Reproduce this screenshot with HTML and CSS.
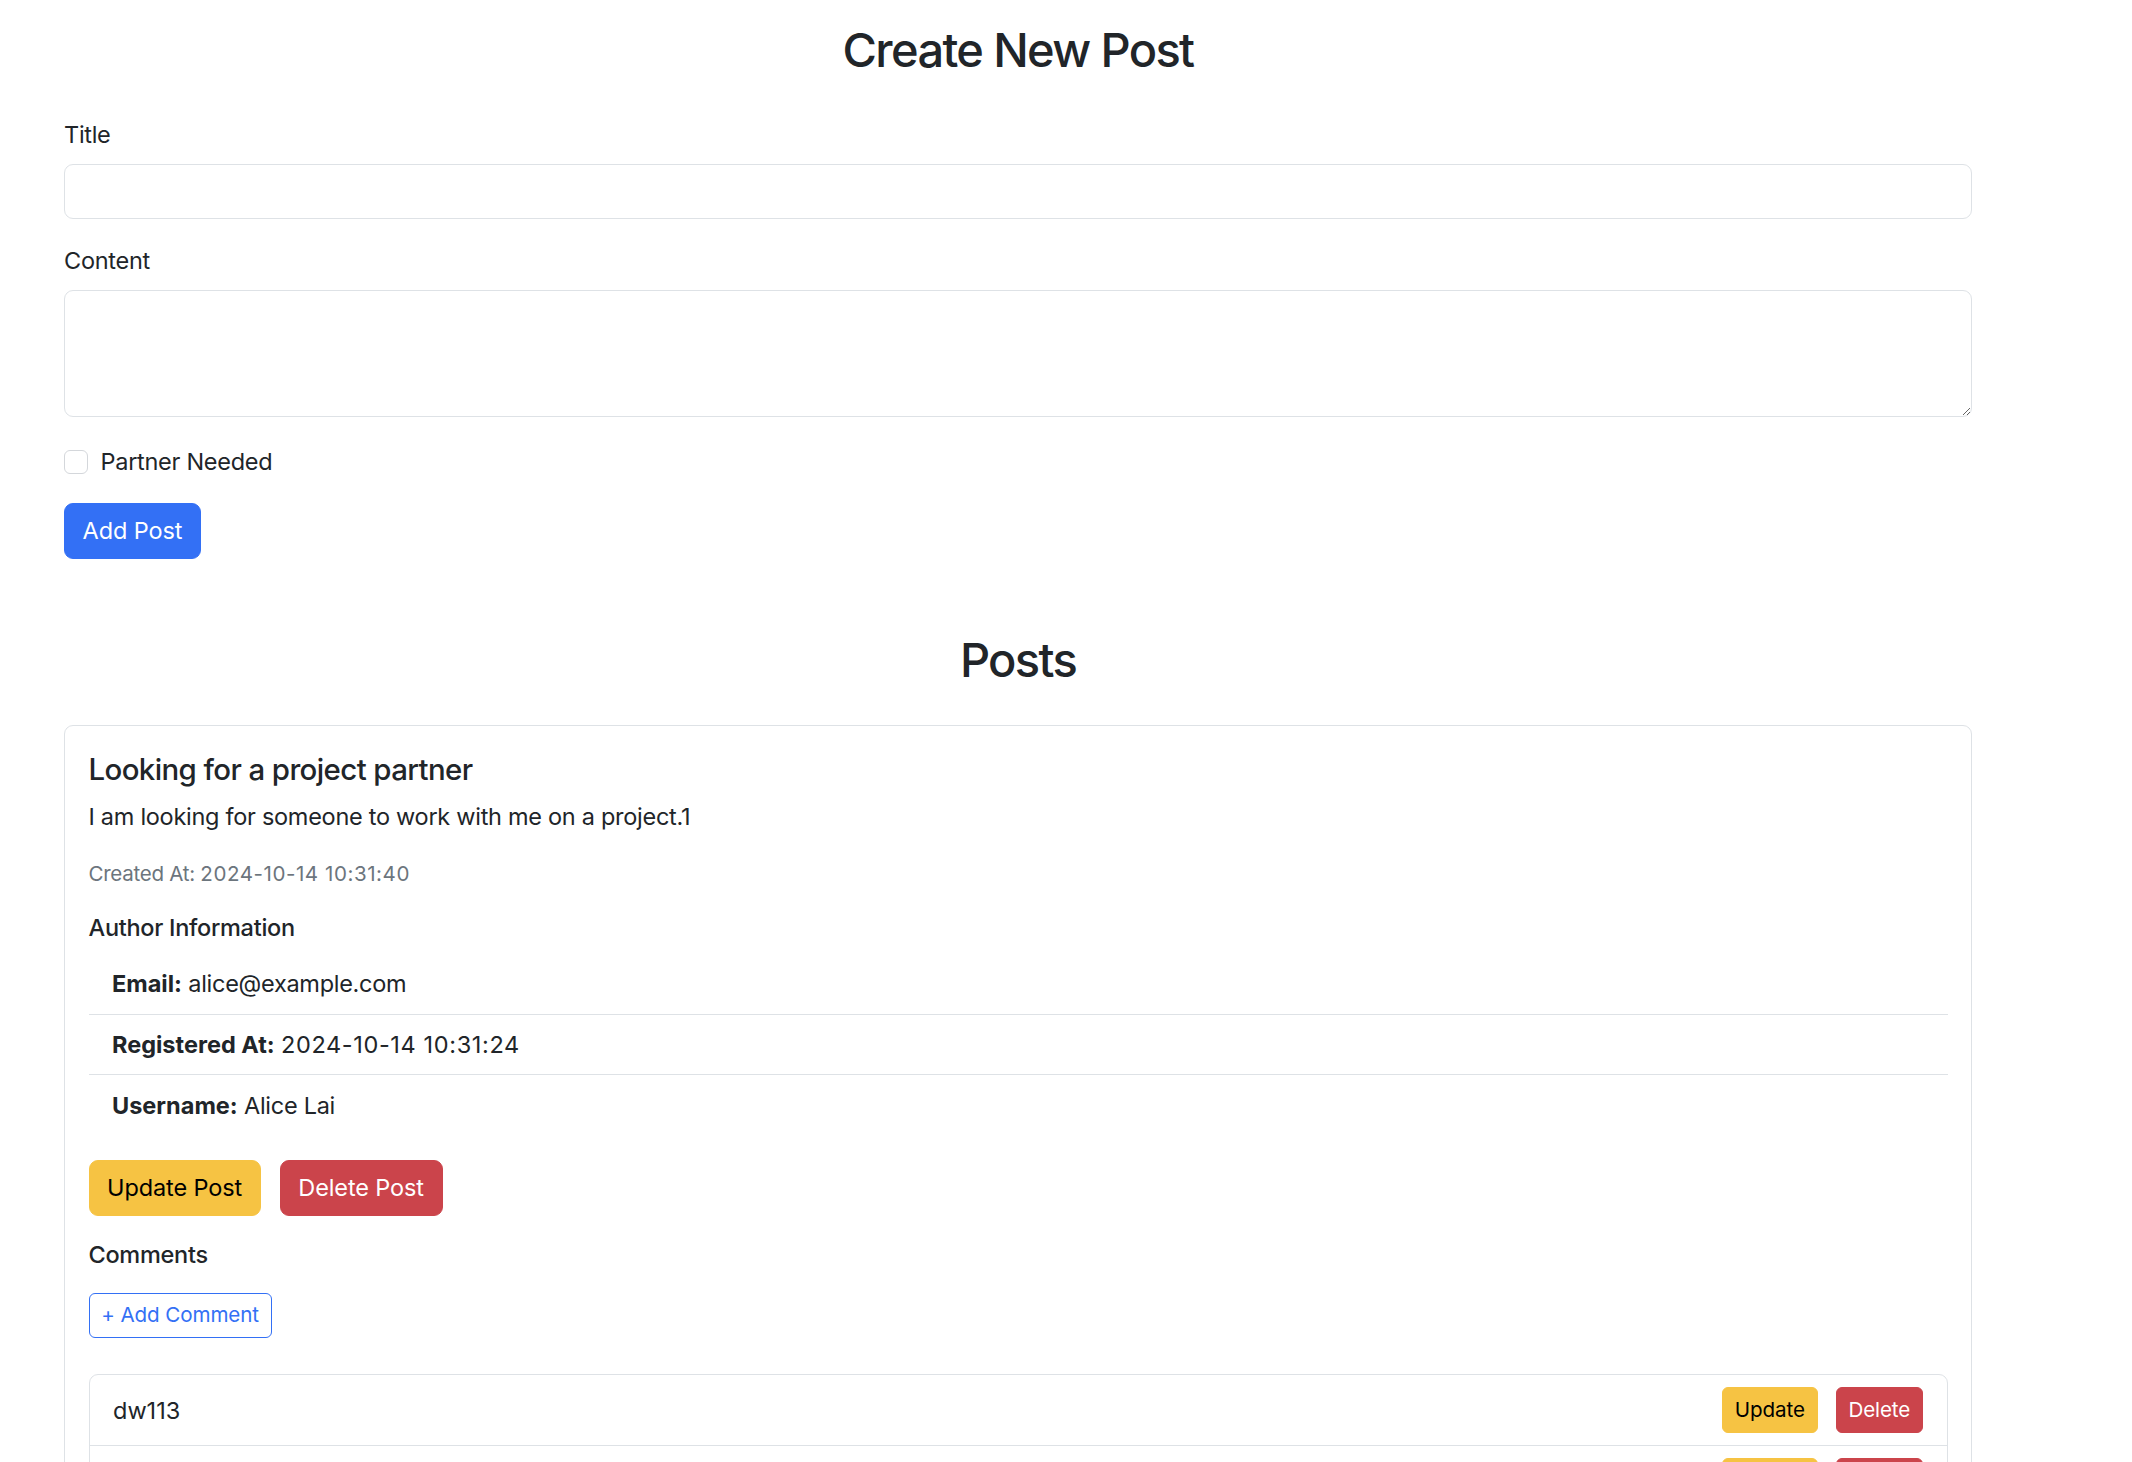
FILE: index.html
```html
<!DOCTYPE html>
<html lang="en">
<head>
<meta charset="utf-8">
<title>Create New Post</title>
<link rel="stylesheet" href="styles.css">
</head>
<body>
<div class="container">
  <h2 class="page-title">Create New Post</h2>
  <form class="post-form">
    <div class="field">
      <label class="field-label" for="title">Title</label>
      <input class="text-input" id="title" type="text">
    </div>
    <div class="field field-last">
      <label class="field-label" for="content">Content</label>
      <textarea class="text-input text-area" id="content" rows="3"></textarea>
    </div>
    <div class="check">
      <input class="check-box" id="partner" type="checkbox">
      <label class="check-label" for="partner">Partner Needed</label>
    </div>
    <button class="btn btn-primary" type="button">Add Post</button>
  </form>

  <h2 class="section-title">Posts</h2>

  <div class="card">
    <div class="card-body">
      <h5 class="card-title">Looking for a project partner</h5>
      <p class="card-text card-desc">I am looking for someone to work with me on a project.1</p>
      <p class="card-text"><small class="muted">Created At: <span class="num">2024-10-14 10:31:40</span></small></p>
      <h6 class="sub-title">Author Information</h6>
      <ul class="info-list">
        <li class="info-item"><strong>Email:</strong> alice@example.com</li>
        <li class="info-item"><strong>Registered At:</strong> <span class="num">2024-10-14 10:31:24</span></li>
        <li class="info-item"><strong>Username:</strong> Alice Lai</li>
      </ul>
      <div class="actions">
        <button class="btn btn-warning" type="button">Update Post</button>
        <button class="btn btn-danger" type="button">Delete Post</button>
      </div>
      <h6 class="sub-title comments-title">Comments</h6>
      <button class="btn btn-sm btn-outline" type="button">+ Add Comment</button>
      <ul class="comment-list">
        <li class="comment-item">
          <span class="comment-text">dw113</span>
          <div class="comment-actions">
            <button class="btn btn-sm btn-warning" type="button">Update</button>
            <button class="btn btn-sm btn-danger" type="button">Delete</button>
          </div>
        </li>
        <li class="comment-item">
          <span class="comment-text">Sounds great, count me in!</span>
          <div class="comment-actions">
            <button class="btn btn-sm btn-warning" type="button">Update</button>
            <button class="btn btn-sm btn-danger" type="button">Delete</button>
          </div>
        </li>
      </ul>
    </div>
  </div>
</div>
</body>
</html>
```

FILE: styles.css
```css
* {
  box-sizing: border-box;
}

html,
body {
  margin: 0;
  background: #ffffff;
}

body {
  font-family: Inter, "Noto Sans", "Liberation Sans", sans-serif;
  font-size: 23.5px;
  line-height: 1.5;
  letter-spacing: -0.012em;
  color: #212529;
}

.container {
  width: 1908px;
  margin-left: 64px;
  padding-top: 22px;
  padding-bottom: 60px;
}

.page-title,
.section-title {
  font-size: 47px;
  font-weight: 500;
  line-height: 1.2;
  letter-spacing: -0.035em;
  text-align: center;
  margin: 0;
}

.page-title {
  margin-bottom: 38.6px;
}

.section-title {
  margin-top: 73px;
  margin-bottom: 36.6px;
}

.field {
  margin-bottom: 23.5px;
}

.field-last {
  margin-bottom: 27.5px;
}

.field-label {
  display: block;
  margin-bottom: 11.8px;
}

.text-input {
  display: block;
  width: 100%;
  height: 55px;
  padding: 8.8px 17.6px;
  font: inherit;
  color: #212529;
  background: #ffffff;
  border: 1px solid #dee2e6;
  border-radius: 9px;
  outline: none;
}

.text-area {
  height: 127px;
  resize: vertical;
}

.check {
  display: flex;
  align-items: flex-start;
  min-height: 35.25px;
  margin-bottom: 23.5px;
}

.check-box {
  appearance: none;
  -webkit-appearance: none;
  width: 24px;
  height: 24px;
  margin: 6px 12.5px 0 0;
  border: 1px solid #d4d7db;
  border-radius: 6px;
  background: #ffffff;
  flex: none;
}

.btn {
  display: inline-block;
  font: inherit;
  font-size: 23.5px;
  line-height: 35.2px;
  letter-spacing: -0.005em;
  padding: 9.4px 17.6px;
  border: 1px solid transparent;
  border-radius: 9px;
  cursor: pointer;
  white-space: nowrap;
}

.btn-primary {
  background: #3370f5;
  border-color: #3370f5;
  color: #ffffff;
}

.btn-warning {
  background: #f6c343;
  border-color: #f6c343;
  color: #000000;
}

.btn-danger {
  background: #cb444b;
  border-color: #cb444b;
  color: #ffffff;
}

.btn-sm {
  font-size: 20.6px;
  line-height: 30.9px;
  padding: 6.5px 11.8px;
  border-radius: 6px;
}

.btn-outline {
  background: #ffffff;
  border-color: #3370f5;
  color: #3370f5;
}

.card {
  border: 1px solid #dee2e6;
  border-radius: 9px;
  background: #ffffff;
}

.card-body {
  padding: 23.5px;
}

.card-title {
  font-size: 29.4px;
  font-weight: 500;
  line-height: 1.2;
  letter-spacing: -0.02em;
  margin: 0 0 11.8px;
  padding-top: 3px;
}

.card-text {
  margin: 0 0 23.5px;
}

.card-desc {
  margin-bottom: 20.5px;
}

.muted {
  font-size: 0.875em;
  color: #6c757d;
}

.num {
  letter-spacing: 0.027em;
}

.sub-title {
  font-size: 23.5px;
  font-weight: 500;
  line-height: 1.2;
  margin: 0 0 11.8px;
}

.info-list {
  list-style: none;
  margin: 0;
  padding: 0;
}

.info-item {
  padding: 12.25px 23.5px;
  border-bottom: 1px solid #dee2e6;
}

.info-item:last-child {
  border-bottom: 0;
}

.info-item strong {
  font-weight: 700;
  letter-spacing: 0;
}

.actions {
  display: flex;
  gap: 19px;
  margin-top: 24.5px;
}

.comments-title {
  margin-top: 25.4px;
  margin-bottom: 23.4px;
}

.comment-list {
  list-style: none;
  margin: 36px 0 0;
  padding: 0;
  border: 1px solid #dee2e6;
  border-radius: 9px;
}

.comment-item {
  display: flex;
  justify-content: space-between;
  align-items: center;
  padding: 11.8px 23.5px;
  border-bottom: 1px solid #dee2e6;
}

.comment-item:last-child {
  border-bottom: 0;
}

.comment-text {
  letter-spacing: 0;
}

.comment-actions {
  display: flex;
  gap: 18px;
}
```
